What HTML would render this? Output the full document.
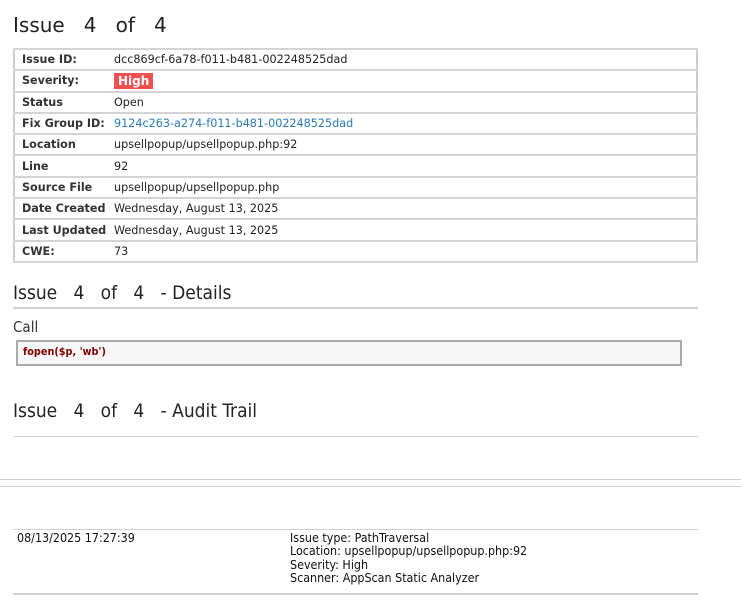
<!DOCTYPE html><html><head><style>
body{margin:0;background:#fff;font-family:"DejaVu Sans","Liberation Sans",sans-serif;color:#222;}
.a{position:absolute;white-space:nowrap}
.c{font-family:"DejaVu Sans Condensed","DejaVu Sans",sans-serif}
table{position:absolute;left:13px;top:48px;width:685px;border-collapse:collapse;border:2px solid #ccc;font-size:11.2px}
td{border:2px solid #d4d4d4;height:19.3px;padding:0 0 0 7px;border-left:none;border-right:none}
td.l{font-weight:bold;width:92px;color:#333}
td.v{padding-left:0}
.hr{position:absolute;height:2px;background:#d0d0d0}
</style></head><body>
<div class="a" style="left:13px;top:13px;font-size:20px;color:#222">Issue&nbsp;&nbsp; 4 &nbsp;&nbsp;of&nbsp;&nbsp; 4</div>
<table>
<tr><td class="l">Issue ID:</td><td class="v">dcc869cf-6a78-f011-b481-002248525dad</td></tr>
<tr><td class="l">Severity:</td><td class="v"><span style="background:#f05050;color:#fff;font-weight:bold;padding:1px 4px;font-size:12px">High</span></td></tr>
<tr><td class="l">Status</td><td class="v">Open</td></tr>
<tr><td class="l">Fix Group ID:</td><td class="v" style="color:#2a7ab8">9124c263-a274-f011-b481-002248525dad</td></tr>
<tr><td class="l">Location</td><td class="v">upsellpopup/upsellpopup.php:92</td></tr>
<tr><td class="l">Line</td><td class="v">92</td></tr>
<tr><td class="l">Source File</td><td class="v">upsellpopup/upsellpopup.php</td></tr>
<tr><td class="l">Date Created</td><td class="v">Wednesday, August 13, 2025</td></tr>
<tr><td class="l">Last Updated</td><td class="v">Wednesday, August 13, 2025</td></tr>
<tr><td class="l">CWE:</td><td class="v">73</td></tr>
</table>
<div class="a c" style="left:13px;top:282px;font-size:19px">Issue&nbsp;&nbsp; 4 &nbsp;&nbsp;of&nbsp;&nbsp; 4 &nbsp;&nbsp;- Details</div>
<div class="hr" style="left:13px;top:307px;width:685px"></div>
<div class="a c" style="left:13px;top:318px;font-size:15px;color:#333">Call</div>
<div class="a" style="left:16px;top:340px;width:662px;height:22px;border:2px solid #aaa;background:#f7f7f7"></div>
<div class="a c" style="left:23px;top:345px;font-size:10.8px;font-weight:bold;color:#800000">fopen($p, 'wb')</div>
<div class="a c" style="left:13px;top:400px;font-size:19px">Issue&nbsp;&nbsp; 4 &nbsp;&nbsp;of&nbsp;&nbsp; 4 &nbsp;&nbsp;- Audit Trail</div>
<div class="hr" style="left:13px;top:436px;width:685px;height:1px"></div>
<div class="hr" style="left:0;top:479px;width:741px;height:1px"></div>
<div class="hr" style="left:0;top:486px;width:741px;height:1px"></div>
<div class="hr" style="left:13px;top:529px;width:685px;height:1px"></div>
<div class="a c" style="left:17px;top:531px;font-size:12.4px;line-height:13.3px;color:#111">08/13/2025 17:27:39</div>
<div class="a c" style="left:290px;top:531px;font-size:12.4px;line-height:13.3px;color:#111">Issue type: PathTraversal<br>Location: upsellpopup/upsellpopup.php:92<br>Severity: High<br>Scanner: AppScan Static Analyzer</div>
<div class="hr" style="left:13px;top:593px;width:685px"></div>
</body></html>
